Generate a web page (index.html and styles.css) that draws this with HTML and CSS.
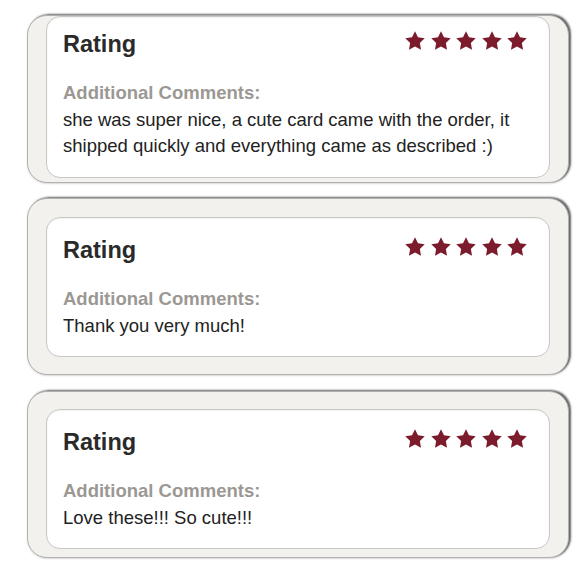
FILE: index.html
```html
<!DOCTYPE html>
<html>
<head>
<meta charset="utf-8">
<link rel="stylesheet" href="styles.css">
</head>
<body>
<div class="list">
  <div class="card card-first">
    <div class="inner inner-first">
      <div class="head">
        <h2 class="title">Rating</h2>
        <div class="stars">
          <svg class="star" viewBox="0 0 24 24"><path d="M12 1.4l3.25 6.6 7.35 1.05-5.3 5.15 1.28 7.3L12 18.05l-6.58 3.45 1.28-7.3-5.3-5.15L8.75 8z"/></svg>
          <svg class="star" viewBox="0 0 24 24"><path d="M12 1.4l3.25 6.6 7.35 1.05-5.3 5.15 1.28 7.3L12 18.05l-6.58 3.45 1.28-7.3-5.3-5.15L8.75 8z"/></svg>
          <svg class="star" viewBox="0 0 24 24"><path d="M12 1.4l3.25 6.6 7.35 1.05-5.3 5.15 1.28 7.3L12 18.05l-6.58 3.45 1.28-7.3-5.3-5.15L8.75 8z"/></svg>
          <svg class="star" viewBox="0 0 24 24"><path d="M12 1.4l3.25 6.6 7.35 1.05-5.3 5.15 1.28 7.3L12 18.05l-6.58 3.45 1.28-7.3-5.3-5.15L8.75 8z"/></svg>
          <svg class="star" viewBox="0 0 24 24"><path d="M12 1.4l3.25 6.6 7.35 1.05-5.3 5.15 1.28 7.3L12 18.05l-6.58 3.45 1.28-7.3-5.3-5.15L8.75 8z"/></svg>
        </div>
      </div>
      <div class="label">Additional Comments:</div>
      <p class="comment">she was super nice, a cute card came with the order, it shipped quickly and everything came as described :)</p>
    </div>
  </div>

  <div class="card card-mid">
    <div class="inner">
      <div class="head">
        <h2 class="title">Rating</h2>
        <div class="stars">
          <svg class="star" viewBox="0 0 24 24"><path d="M12 1.4l3.25 6.6 7.35 1.05-5.3 5.15 1.28 7.3L12 18.05l-6.58 3.45 1.28-7.3-5.3-5.15L8.75 8z"/></svg>
          <svg class="star" viewBox="0 0 24 24"><path d="M12 1.4l3.25 6.6 7.35 1.05-5.3 5.15 1.28 7.3L12 18.05l-6.58 3.45 1.28-7.3-5.3-5.15L8.75 8z"/></svg>
          <svg class="star" viewBox="0 0 24 24"><path d="M12 1.4l3.25 6.6 7.35 1.05-5.3 5.15 1.28 7.3L12 18.05l-6.58 3.45 1.28-7.3-5.3-5.15L8.75 8z"/></svg>
          <svg class="star" viewBox="0 0 24 24"><path d="M12 1.4l3.25 6.6 7.35 1.05-5.3 5.15 1.28 7.3L12 18.05l-6.58 3.45 1.28-7.3-5.3-5.15L8.75 8z"/></svg>
          <svg class="star" viewBox="0 0 24 24"><path d="M12 1.4l3.25 6.6 7.35 1.05-5.3 5.15 1.28 7.3L12 18.05l-6.58 3.45 1.28-7.3-5.3-5.15L8.75 8z"/></svg>
        </div>
      </div>
      <div class="label">Additional Comments:</div>
      <p class="comment">Thank you very much!</p>
    </div>
  </div>

  <div class="card card-last">
    <div class="inner">
      <div class="head">
        <h2 class="title">Rating</h2>
        <div class="stars">
          <svg class="star" viewBox="0 0 24 24"><path d="M12 1.4l3.25 6.6 7.35 1.05-5.3 5.15 1.28 7.3L12 18.05l-6.58 3.45 1.28-7.3-5.3-5.15L8.75 8z"/></svg>
          <svg class="star" viewBox="0 0 24 24"><path d="M12 1.4l3.25 6.6 7.35 1.05-5.3 5.15 1.28 7.3L12 18.05l-6.58 3.45 1.28-7.3-5.3-5.15L8.75 8z"/></svg>
          <svg class="star" viewBox="0 0 24 24"><path d="M12 1.4l3.25 6.6 7.35 1.05-5.3 5.15 1.28 7.3L12 18.05l-6.58 3.45 1.28-7.3-5.3-5.15L8.75 8z"/></svg>
          <svg class="star" viewBox="0 0 24 24"><path d="M12 1.4l3.25 6.6 7.35 1.05-5.3 5.15 1.28 7.3L12 18.05l-6.58 3.45 1.28-7.3-5.3-5.15L8.75 8z"/></svg>
          <svg class="star" viewBox="0 0 24 24"><path d="M12 1.4l3.25 6.6 7.35 1.05-5.3 5.15 1.28 7.3L12 18.05l-6.58 3.45 1.28-7.3-5.3-5.15L8.75 8z"/></svg>
        </div>
      </div>
      <div class="label">Additional Comments:</div>
      <p class="comment">Love these!!! So cute!!!</p>
    </div>
  </div>
</div>
</body>
</html>
```

FILE: styles.css
```css
html, body {
  margin: 0;
  padding: 0;
  background: #ffffff;
}

body {
  font-family: "Liberation Sans", Arial, sans-serif;
  width: 580px;
  height: 580px;
  overflow: hidden;
}

.list {
  display: flex;
  flex-direction: column;
  gap: 15px;
  padding: 15px 0 0 27px;
  width: 542px;
}

.card {
  box-sizing: border-box;
  width: 542px;
  background: #f3f1ee;
  border: 1px solid #b3b1ad;
  border-radius: 20px;
  box-shadow: 2px -1px 2px rgba(0, 0, 0, 0.6), 0 1px 2px rgba(0, 0, 0, 0.12);
  padding: 18px;
}

.card-first {
  padding: 0 18px 4px 18px;
}

.card-mid {
  padding: 18px 18px 17px 18px;
}

.card-last {
  margin-top: 1px;
  padding: 17px 18px 8px 18px;
}

.inner {
  background: #ffffff;
  border: 1px solid #c9c7c3;
  border-radius: 14px;
  box-shadow: inset 0 1px 2px rgba(0, 0, 0, 0.06);
  padding: 18px 21px 17px 16px;
}

.inner-first {
  padding-top: 13px;
  padding-bottom: 18px;
}

.head {
  display: flex;
  justify-content: space-between;
  align-items: center;
  height: 28px;
}

.title {
  margin: 0;
  font-size: 23.5px;
  line-height: 28px;
  font-weight: bold;
  color: #2a2a2a;
}

.stars {
  display: flex;
  gap: 3.5px;
  margin-top: -6px;
}

.star {
  width: 22px;
  height: 22px;
  display: block;
}

.star path {
  fill: #7b1b2c;
}

.label {
  margin-top: 22px;
  font-size: 18.5px;
  line-height: 26px;
  font-weight: bold;
  color: #9b9894;
}

.comment {
  margin: 1px 0 0 0;
  font-size: 18.5px;
  line-height: 26px;
  color: #222222;
}
```
